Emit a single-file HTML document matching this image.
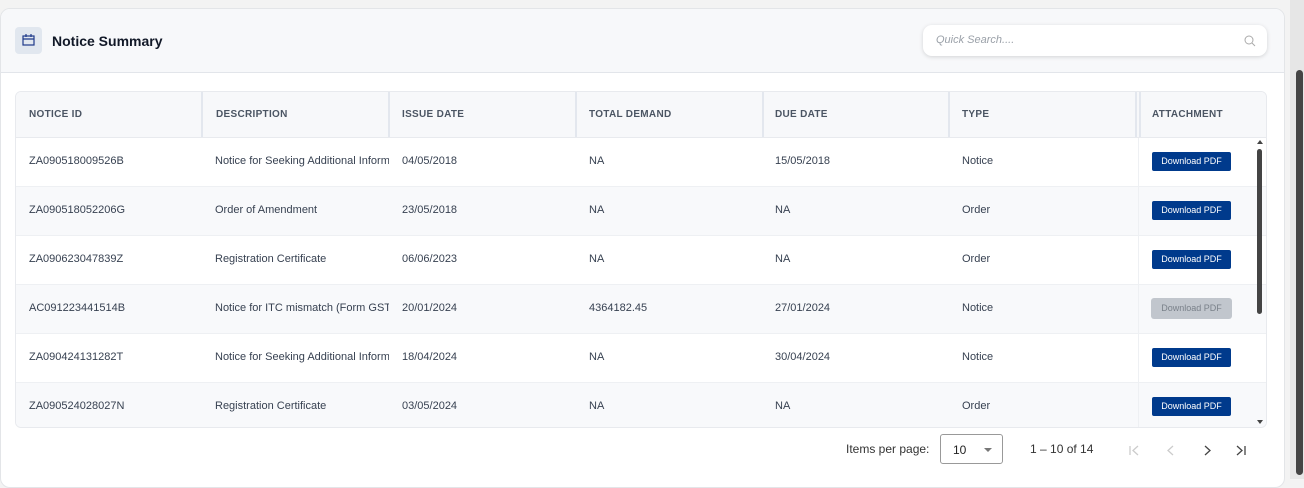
<!DOCTYPE html>
<html><head><style>
*{box-sizing:border-box;margin:0;padding:0}
body{width:1304px;height:479px;overflow:hidden;background:#f3f3f3;font-family:"Liberation Sans",sans-serif;position:relative}
.card{position:absolute;left:0;top:8px;width:1285px;height:480px;background:#fff;border:1px solid #e3e5e8;border-radius:10px;overflow:hidden}
.hdr{height:64px;background:#f7f8fa;border-bottom:1px solid #e2e5ea;position:relative}
.ico{position:absolute;left:14px;top:18px;width:27px;height:27px;background:#e1e7ef;border-radius:4px}
.title{position:absolute;left:51px;top:24px;font-size:14px;font-weight:bold;color:#111827}
.search{position:absolute;left:922px;top:16px;width:344px;height:31px;background:#fff;border-radius:9px;box-shadow:0 1px 4px rgba(0,0,0,.15)}
.search span{position:absolute;left:13px;top:9px;font-size:11px;font-style:italic;color:#9aa0a8}
.tbl{position:absolute;left:15px;top:91px;width:1252px;height:337px;border:1px solid #e8eaee;border-radius:6px;overflow:hidden}
.th{height:46px;background:#f7f8fa;border-bottom:1px solid #e8eaee;position:relative}
.th div{position:absolute;top:17px;font-size:10px;font-weight:bold;color:#4b5563;letter-spacing:.3px}
.sep{position:absolute;top:0;width:2px;height:45px;background:#e3e7ee}
.row{height:49px;position:relative;border-bottom:1px solid #eef0f3;font-size:11px;color:#374151}
.row.alt{background:#f8f9fb}
.row div{position:absolute;top:17px;white-space:nowrap}
.btn{position:absolute;left:1136px;top:14px;width:79px;height:19px;background:#003a8c;color:#fff;border-radius:2px;font-size:9px;text-align:center;line-height:19px}
.btn.dis{background:#c1c6cd;color:#7a818a;left:1135px;top:13px;width:81px;height:21px;line-height:21px;border-radius:3px}
.acol{position:absolute;left:1122px;top:46px;width:1px;height:290px;background:#eef0f3}
.foot{position:absolute;top:424px;font-size:12px;color:#333}
</style></head><body>
<div class="card">
 <div class="hdr">
  <div class="ico"><svg width="27" height="27" viewBox="0 0 27 27"><rect x="8" y="9" width="11" height="9" fill="none" stroke="#1e3a8a" stroke-width="1.2"/><line x1="8" y1="12" x2="19" y2="12" stroke="#1e3a8a" stroke-width="1.2"/><line x1="11" y1="7" x2="11" y2="10" stroke="#1e3a8a" stroke-width="1.2"/><line x1="16" y1="7" x2="16" y2="10" stroke="#1e3a8a" stroke-width="1.2"/></svg></div>
  <div class="title">Notice Summary</div>
  <div class="search"><span>Quick Search....</span><svg style="position:absolute;left:321px;top:10px" width="12" height="12" viewBox="0 0 12 12"><circle cx="5" cy="5" r="4" fill="none" stroke="#aaa" stroke-width="1"/><line x1="8" y1="8" x2="11" y2="11" stroke="#aaa"/></svg></div>
 </div>
</div>
<div class="tbl">
 <div class="th">
  <div style="left:13px">NOTICE ID</div><div style="left:200px">DESCRIPTION</div><div style="left:386px">ISSUE DATE</div><div style="left:573px">TOTAL DEMAND</div><div style="left:759px">DUE DATE</div><div style="left:946px">TYPE</div><div style="left:1136px">ATTACHMENT</div>
  <span class="sep" style="left:185px"></span><span class="sep" style="left:372px"></span><span class="sep" style="left:559px"></span><span class="sep" style="left:746px"></span><span class="sep" style="left:932px"></span><span class="sep" style="left:1119px"></span><span class="sep" style="left:1123px"></span>
 </div>
 <div class="row"><div style="left:13px">ZA090518009526B</div><div style="left:199px;width:174px;overflow:hidden">Notice for Seeking Additional Information</div><div style="left:386px">04/05/2018</div><div style="left:573px">NA</div><div style="left:759px">15/05/2018</div><div style="left:946px">Notice</div><span class="btn">Download PDF</span></div>
 <div class="row alt"><div style="left:13px">ZA090518052206G</div><div style="left:199px">Order of Amendment</div><div style="left:386px">23/05/2018</div><div style="left:573px">NA</div><div style="left:759px">NA</div><div style="left:946px">Order</div><span class="btn">Download PDF</span></div>
 <div class="row"><div style="left:13px">ZA090623047839Z</div><div style="left:199px">Registration Certificate</div><div style="left:386px">06/06/2023</div><div style="left:573px">NA</div><div style="left:759px">NA</div><div style="left:946px">Order</div><span class="btn">Download PDF</span></div>
 <div class="row alt"><div style="left:13px">AC091223441514B</div><div style="left:199px;width:174px;overflow:hidden">Notice for ITC mismatch (Form GST</div><div style="left:386px">20/01/2024</div><div style="left:573px">4364182.45</div><div style="left:759px">27/01/2024</div><div style="left:946px">Notice</div><span class="btn dis">Download PDF</span></div>
 <div class="row"><div style="left:13px">ZA090424131282T</div><div style="left:199px;width:174px;overflow:hidden">Notice for Seeking Additional Information</div><div style="left:386px">18/04/2024</div><div style="left:573px">NA</div><div style="left:759px">30/04/2024</div><div style="left:946px">Notice</div><span class="btn">Download PDF</span></div>
 <div class="row alt"><div style="left:13px">ZA090524028027N</div><div style="left:199px">Registration Certificate</div><div style="left:386px">03/05/2024</div><div style="left:573px">NA</div><div style="left:759px">NA</div><div style="left:946px">Order</div><span class="btn">Download PDF</span></div>
 <span class="acol"></span>
 <div style="position:absolute;left:1241px;top:57px;width:5px;height:165px;background:#444;border-radius:3px"></div>
 <div style="position:absolute;left:1241px;top:48px;width:0;height:0;border-left:3px solid transparent;border-right:3px solid transparent;border-bottom:4px solid #444"></div>
 <div style="position:absolute;left:1241px;top:328px;width:0;height:0;border-left:3px solid transparent;border-right:3px solid transparent;border-top:4px solid #444"></div>
</div>
<div class="foot" style="left:846px;top:442px">Items per page:</div>
<div style="position:absolute;left:940px;top:434px;width:63px;height:30px;border:1px solid #999;border-radius:3px;background:#fff"><span style="position:absolute;left:12px;top:8px;font-size:12px;color:#222">10</span><span style="position:absolute;left:43px;top:13px;border-left:4px solid transparent;border-right:4px solid transparent;border-top:4px solid #777"></span></div>
<div class="foot" style="left:1030px;top:442px">1 – 10 of 14</div>
<svg style="position:absolute;left:1125px;top:443px" width="130" height="16" viewBox="0 0 130 16"><g fill="none" stroke-width="1.3"><path d="M5 3v9M13 3l-5 4.5 5 4.5" stroke="#ccc"/><path d="M48 3l-5 4.5 5 4.5" stroke="#ccc"/><path d="M80 3l5 4.5-5 4.5" stroke="#444"/><path d="M112 3l5 4.5-5 4.5M120 3v9" stroke="#444"/></g></svg>
<div style="position:absolute;left:1290px;top:0;width:14px;height:479px;background:#e6e6e6"></div>
<div style="position:absolute;left:1296px;top:70px;width:7px;height:405px;background:#444;border-radius:4px"></div>
</body></html>
